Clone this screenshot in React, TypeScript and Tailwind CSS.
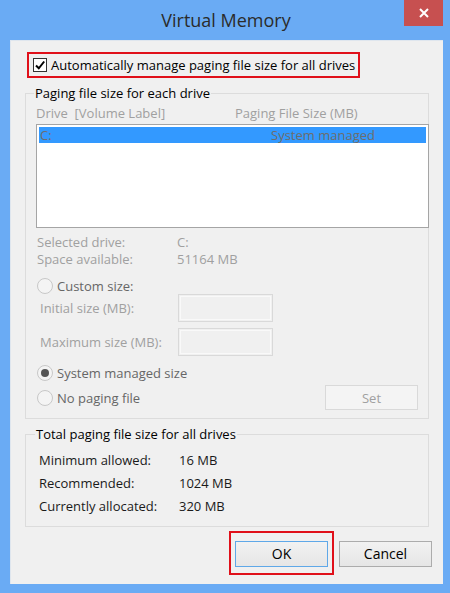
import React from "react"

const font = { fontFamily: '"Open Sans", "Noto Sans", sans-serif' }

function Radio({ checked }: { checked?: boolean }) {
  return (
    <span className="w-[16px] h-[16px] rounded-full border border-[#c8c8c8] bg-[#f4f4f4] flex items-center justify-center shrink-0">
      {checked && <span className="w-[8px] h-[8px] rounded-full bg-[#555555]" />}
    </span>
  )
}

function DisabledInput() {
  return (
    <div className="w-[95px] h-[28px] border border-[#d9d9d9] p-[1px]">
      <div className="w-full h-full border border-[#f9f9f9] bg-[#f0f0f0]" />
    </div>
  )
}

export default function App() {
  return (
    <div className="w-[450px] h-[593px] bg-[#6aabf4] flex flex-col text-[13px] leading-[16px] text-black" style={font}>
      {/* title bar */}
      <div className="h-[40px] relative flex items-center justify-center">
        <span className="text-[18px] text-[#2b2b2b] pl-[2px]">Virtual Memory</span>
        <div className="absolute right-[7px] top-0 w-[39px] h-[26px] bg-[#c75050] flex items-center justify-center">
          <svg width="10" height="10" viewBox="0 0 10 10">
            <path d="M1 1 L9 9 M9 1 L1 9" stroke="#fff" strokeWidth="2" />
          </svg>
        </div>
      </div>

      <div className="ml-[10px] mr-[7px] h-[544px] bg-[#f0f0f0] flex flex-col border-l border-t border-[#dfe6ee]">
        {/* auto manage checkbox */}
        <div className="mt-[11px] ml-[16px] w-[333px] h-[26px] border-2 border-[#e0101a] flex items-center pl-[4px]">
          <span className="w-[14px] h-[14px] border border-[#333333] bg-white flex items-center justify-center">
            <svg width="12" height="12" viewBox="0 0 12 12">
              <path d="M2 6.5 L4.8 9.3 L10.2 2.5" stroke="#000" strokeWidth="2" fill="none" />
            </svg>
          </span>
          <span className="ml-[4px]">Automatically manage paging file size for all drives</span>
        </div>

        {/* paging file size for each drive */}
        <fieldset className="mt-[7px] ml-[14px] mr-[14px] border border-[#dcdcdc] pb-[8px]">
          <legend className="ml-[8px] px-[1px] h-[16px]">Paging file size for each drive</legend>

          <div className="mt-[4px] pl-[10px] flex text-[#a0a0a0]">
            <span className="w-[199px]">Drive&nbsp; [Volume Label]</span>
            <span>Paging File Size (MB)</span>
          </div>

          <div className="mt-[3px] ml-[10px] mr-[-1px] h-[104px] border border-[#a5a5a5] bg-white p-[1px]">
            <div className="mt-[1px] mx-[1px] h-[16px] bg-[#3399ff] flex items-center pl-[1px] text-[#6d6d6d]">
              <span className="w-[231px]">C:</span>
              <span>System managed</span>
            </div>
          </div>

          <div className="mt-[6px] pl-[11px] text-[#a0a0a0] leading-[17px]">
            <div className="flex">
              <span className="w-[140px]">Selected drive:</span>
              <span>C:</span>
            </div>
            <div className="flex">
              <span className="w-[140px]">Space available:</span>
              <span>51164 MB</span>
            </div>
          </div>

          <div className="mt-[10px] pl-[11px] flex items-center gap-[4px] text-[#666666]">
            <Radio />
            <span>Custom size:</span>
          </div>

          <div className="pl-[14px] flex items-center text-[#a0a0a0]">
            <span className="w-[138px]">Initial size (MB):</span>
            <DisabledInput />
          </div>
          <div className="mt-[6px] pl-[14px] flex items-center text-[#a0a0a0]">
            <span className="w-[138px]">Maximum size (MB):</span>
            <DisabledInput />
          </div>

          <div className="mt-[9px] pl-[11px] flex items-center gap-[4px] text-[#666666]">
            <Radio checked />
            <span>System managed size</span>
          </div>
          <div className="mt-[4px] pl-[11px] pr-[10px] flex items-center justify-between text-[#666666]">
            <div className="flex items-center gap-[4px]">
              <Radio />
              <span>No paging file</span>
            </div>
            <div className="w-[93px] h-[25px] border border-[#d9d9d9] bg-[#f4f4f4] flex items-center justify-center text-[#a0a0a0]">
              Set
            </div>
          </div>
        </fieldset>

        {/* totals */}
        <fieldset className="mt-[7px] ml-[14px] mr-[14px] border border-[#dcdcdc] pb-[9px]">
          <legend className="ml-[9px] px-[1px] h-[16px]">Total paging file size for all drives</legend>
          <div className="mt-[6px] pl-[13px] text-[#1a1a1a]">
            <div className="h-[23px] flex items-center">
              <span className="w-[140px]">Minimum allowed:</span>
              <span>16 MB</span>
            </div>
            <div className="h-[23px] flex items-center">
              <span className="w-[140px]">Recommended:</span>
              <span>1024 MB</span>
            </div>
            <div className="h-[23px] flex items-center">
              <span className="w-[140px]">Currently allocated:</span>
              <span>320 MB</span>
            </div>
          </div>
        </fieldset>

        {/* buttons */}
        <div className="mt-[4px] pr-[11px] flex justify-end items-start gap-[5px]">
          <div className="w-[105px] h-[44px] border-2 border-[#e0101a] pt-[8px] pl-[4px]">
            <button className="w-[93px] h-[26px] border border-[#5fa8e8] bg-gradient-to-b from-[#f2f2f2] to-[#e6e6e6] text-[14px] text-black">
              OK
            </button>
          </div>
          <button className="mt-[10px] w-[93px] h-[26px] border border-[#acacac] bg-gradient-to-b from-[#f2f2f2] to-[#e6e6e6] text-[14px] text-black">
            Cancel
          </button>
        </div>
      </div>
    </div>
  )
}
